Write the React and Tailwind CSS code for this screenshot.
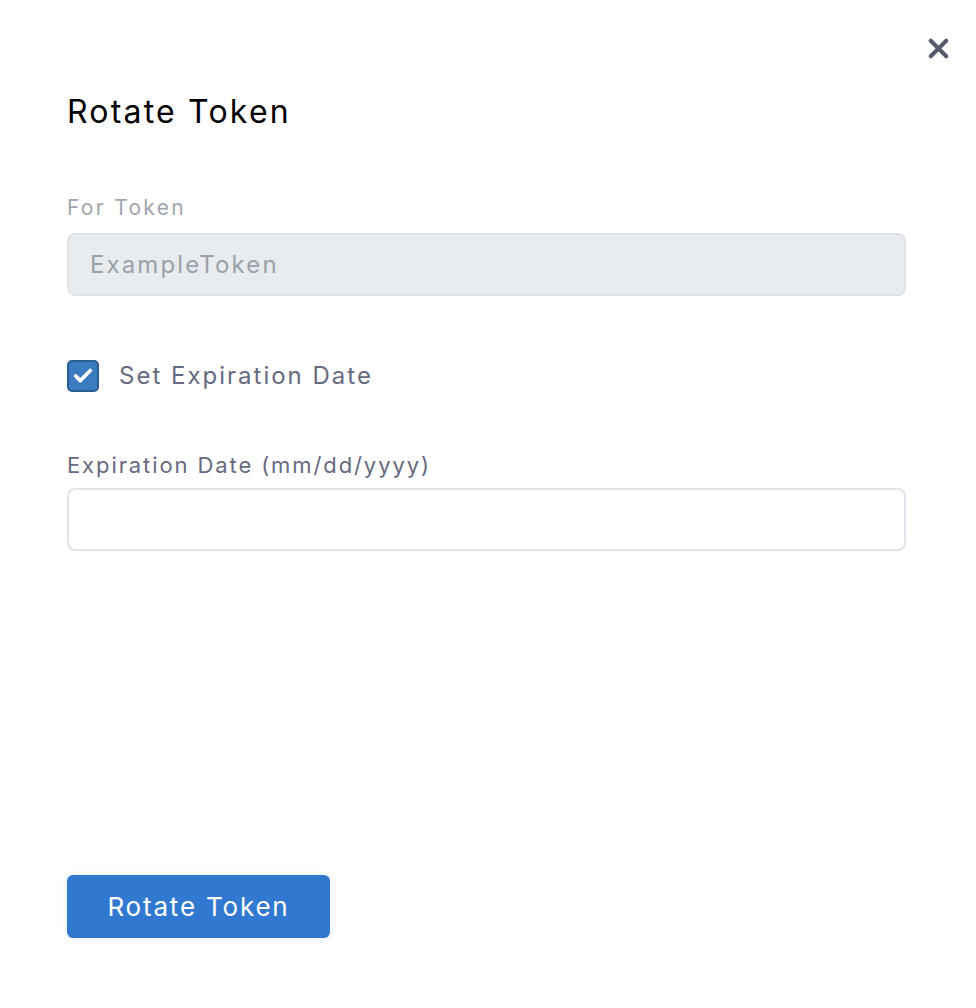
import { X, Check } from 'lucide-react'

export default function App() {
  return (
    <main className="relative w-[976px] h-[1008px] bg-white font-['Inter',sans-serif]">
      <button className="absolute right-[22px] top-[33px] text-[#555a6e]">
        <X size={31} strokeWidth={3.2} />
      </button>
      <div className="flex flex-col h-full pl-[67px] pr-[70px] pt-[92px] pb-[70px]">
        <h1 className="text-[32px] leading-[40px] tracking-[2.2px] text-black">Rotate Token</h1>

        <label className="mt-[61px] text-[21px] leading-[30px] tracking-[2.3px] text-[#a0a6af]">For Token</label>
        <div className="mt-[10px] h-[63px] rounded-[8px] border-2 border-[#dfe3e8] bg-[#e8ecef] flex items-center px-[21px]">
          <span className="text-[24px] tracking-[2.1px] text-[#9aa1aa]">ExampleToken</span>
        </div>

        <div className="mt-[63px] flex items-center gap-[20px]">
          <div className="w-[32px] h-[32px] rounded-[5px] bg-[#3b7bc0] border-2 border-[#2c5e93] flex items-center justify-center">
            <Check size={22} strokeWidth={4} className="text-white" />
          </div>
          <span className="text-[24px] leading-[34px] tracking-[2px] text-[#676a80]">Set Expiration Date</span>
        </div>

        <label className="mt-[56px] text-[22px] leading-[32px] tracking-[1.9px] text-[#676a80]">Expiration Date (mm/dd/yyyy)</label>
        <div className="mt-[7px] h-[63px] rounded-[8px] border-2 border-[#e2e3ec] bg-white" />

        <div className="flex-1" />
        <button className="w-[263px] h-[63px] rounded-[6px] bg-[#3178d0] text-white text-[26px] tracking-[1.8px] shadow-[0_0_6px_rgba(49,120,208,0.15)]">
          Rotate Token
        </button>
      </div>
    </main>
  )
}
